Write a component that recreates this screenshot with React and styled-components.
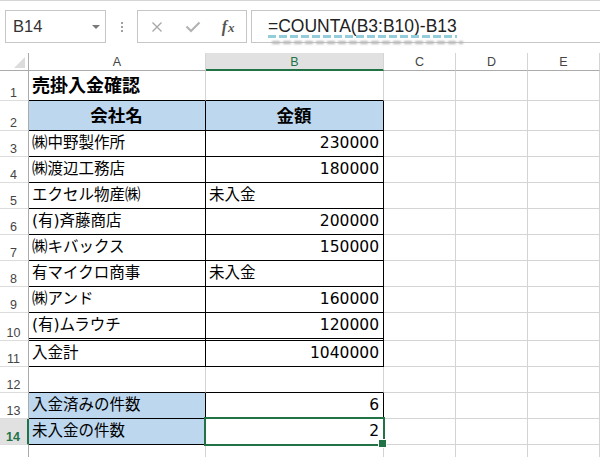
import styled, { createGlobalStyle } from 'styled-components'

const GlobalStyle = createGlobalStyle`
  html, body { margin: 0; padding: 0; background: #fff; }
  * { box-sizing: border-box; }
`

const green = '#217346'
const gridLine = '#d4d4d4'
const blue = '#bdd7ee'

const Page = styled.div`
  width: 600px;
  height: 457px;
  overflow: hidden;
  background: #fff;
  font-family: "Liberation Sans", Arial, sans-serif;
`

const FormulaBar = styled.div`
  height: 53px;
  border-top: 1px solid #d5d5d5;
  display: flex;
  align-items: flex-start;
  padding: 9px 0 0 5px;
`

const NameBox = styled.div`
  width: 101px;
  height: 33px;
  border: 1px solid #c6c6c6;
  display: flex;
  align-items: center;
  justify-content: space-between;
  padding: 0 5px 0 7px;
  font-size: 16.5px;
  color: #333;
`

const Arrow = styled.span`
  width: 0;
  height: 0;
  border-left: 4px solid transparent;
  border-right: 4px solid transparent;
  border-top: 4px solid #7a7a7a;
  margin-top: 1px;
`

const Grip = styled.div`
  width: 31px;
  height: 33px;
  display: flex;
  align-items: center;
  justify-content: center;
  &::before {
    content: '';
    width: 2px;
    height: 2px;
    background: #a0a0a0;
    margin-top: -8px;
    box-shadow: 0 4px 0 #a0a0a0, 0 8px 0 #a0a0a0;
  }
`

const ButtonGroup = styled.div`
  width: 110px;
  height: 33px;
  border: 1px solid #c6c6c6;
  display: flex;
  align-items: center;
  padding-left: 1px;
`

const BarButton = styled.span`
  width: 36px;
  display: flex;
  align-items: center;
  justify-content: center;
`

const Fx = styled.span`
  font-family: "Liberation Serif", "DejaVu Serif", serif;
  font-style: italic;
  font-weight: 700;
  font-size: 16px;
  color: #555;
  small {
    font-size: 13px;
    margin-left: 1px;
  }
`

const FormulaInput = styled.div`
  flex: 1;
  height: 33px;
  margin-left: 4px;
  border: 1px solid #c6c6c6;
  border-right: none;
  display: flex;
  align-items: center;
  padding-left: 16px;
  font-size: 17.5px;
  color: #222;
`

const FormulaText = styled.span`
  position: relative;
  &::after {
    content: '';
    position: absolute;
    left: 0;
    right: 0;
    bottom: -1px;
    height: 3px;
    background: repeating-linear-gradient(90deg, #93cddb 0 8px, transparent 8px 11px);
  }
  &::before {
    content: '';
    position: absolute;
    left: 4px;
    right: -6px;
    bottom: -7px;
    height: 3px;
    filter: blur(1px);
    background: repeating-linear-gradient(90deg, #b5b5b5 0 8px, transparent 8px 11px);
  }
`

const Sheet = styled.div`
  display: grid;
  grid-template-columns: 29px 177px 178px 72px 72px 72px;
  grid-template-rows: 18px 30px 30px repeat(7, 26px) 28px repeat(5, 26px);
`

const Corner = styled.div`
  border-right: 1px solid #ababab;
  border-bottom: 1px solid #ababab;
  display: flex;
  align-items: flex-end;
  justify-content: flex-end;
  padding: 0 3px 2px 0;
  &::after {
    content: '';
    width: 0;
    height: 0;
    border-left: 11px solid transparent;
    border-bottom: 11px solid #dcdcdc;
  }
`

const ColHead = styled.div`
  display: flex;
  align-items: center;
  justify-content: center;
  padding-top: 2px;
  border-right: 1px solid #d5d5d5;
  border-bottom: ${p => (p.$active ? `2px solid ${green}` : '1px solid #ababab')};
  background: ${p => (p.$active ? '#e1e1e1' : '#fff')};
  color: ${p => (p.$active ? green : '#444')};
  font-size: 12.5px;
  line-height: 1;
`

const RowHead = styled.div`
  display: flex;
  align-items: flex-end;
  justify-content: center;
  padding: 0 1px 1px 0;
  border-right: ${p => (p.$active ? `2px solid ${green}` : '1px solid #ababab')};
  border-bottom: 1px solid #dcdcdc;
  background: ${p => (p.$active ? '#e1e1e1' : '#fff')};
  color: ${p => (p.$active ? green : '#444')};
  font-weight: ${p => (p.$active ? 700 : 400)};
  font-size: 12.5px;
  line-height: 1;
`

const Cell = styled.div`
  position: relative;
  display: flex;
  align-items: flex-end;
  justify-content: ${p =>
    p.$align === 'right' ? 'flex-end' : p.$align === 'center' ? 'center' : 'flex-start'};
  padding: 0 4px 5px 3px;
  border-right: 1px solid ${p => p.$rc || gridLine};
  border-bottom: ${p => (p.$double ? '3px double #000' : `1px solid ${p.$bc || gridLine}`)};
  background: ${p => p.$fill || '#fff'};
  font-family: "DejaVu Sans", "Noto Sans CJK JP", sans-serif;
  font-size: ${p => p.$size || 15.5}px;
  font-weight: ${p => (p.$bold ? 700 : 400)};
  line-height: 1;
  white-space: nowrap;
  color: #000;
`

const Selection = styled.div`
  position: absolute;
  inset: -2px;
  border: 2px solid ${green};
  pointer-events: none;
  z-index: 2;
  &::after {
    content: '';
    position: absolute;
    right: -4px;
    bottom: -4px;
    width: 7px;
    height: 7px;
    background: ${green};
    border: 1px solid #fff;
  }
`

const rows = [
  { a: '売掛入金確認', title: true },
  { a: '会社名', b: '金額', head: true },
  { a: '㈱中野製作所', b: '230000' },
  { a: '㈱渡辺工務店', b: '180000' },
  { a: 'エクセル物産㈱', b: '未入金', bText: true },
  { a: '(有)斉藤商店', b: '200000' },
  { a: '㈱キバックス', b: '150000' },
  { a: '有マイクロ商事', b: '未入金', bText: true },
  { a: '㈱アンド', b: '160000' },
  { a: '(有)ムラウチ', b: '120000', double: true },
  { a: '入金計', b: '1040000' },
  { gap: true },
  { a: '入金済みの件数', b: '6', fill: true },
  { a: '未入金の件数', b: '2', fill: true, selected: true },
  { blank: true },
]

const columns = ['A', 'B', 'C', 'D', 'E']

function CancelIcon() {
  return (
    <svg width="12" height="12" viewBox="0 0 12 12">
      <path d="M1.5 1.5 L10.5 10.5 M10.5 1.5 L1.5 10.5" stroke="#a8a8a8" strokeWidth="1.4" fill="none" />
    </svg>
  )
}

function EnterIcon() {
  return (
    <svg width="16" height="12" viewBox="0 0 16 12">
      <path d="M1.5 5.5 L6 10 L14.5 1.5" stroke="#b3b3b3" strokeWidth="2.2" fill="none" />
    </svg>
  )
}

function App() {
  return (
    <Page>
      <GlobalStyle />
      <FormulaBar>
        <NameBox>
          B14
          <Arrow />
        </NameBox>
        <Grip />
        <ButtonGroup>
          <BarButton><CancelIcon /></BarButton>
          <BarButton><EnterIcon /></BarButton>
          <BarButton><Fx>f<small>x</small></Fx></BarButton>
        </ButtonGroup>
        <FormulaInput>
          <FormulaText>=COUNTA(B3:B10)-B13</FormulaText>
        </FormulaInput>
      </FormulaBar>

      <Sheet>
        <Corner />
        {columns.map(c => (
          <ColHead key={c} $active={c === 'B'}>{c}</ColHead>
        ))}

        {rows.map((r, i) => {
          const n = i + 1
          const inTable = !r.title && !r.gap && !r.blank
          const rc = inTable ? '#000' : undefined
          const bc = inTable || r.title || r.gap ? '#000' : undefined
          return [
            <RowHead key={`h${n}`} $active={r.selected}>{n}</RowHead>,
            <Cell
              key={`a${n}`}
              $rc={rc}
              $bc={bc}
              $double={r.double}
              $fill={r.head || r.fill ? blue : undefined}
              $align={r.head ? 'center' : 'left'}
              $bold={r.head || r.title}
              $size={r.title ? 18 : r.head ? 17.5 : undefined}
            >
              {r.a}
            </Cell>,
            <Cell
              key={`b${n}`}
              $rc={rc}
              $bc={bc}
              $double={r.double}
              $fill={r.head ? blue : undefined}
              $align={r.head ? 'center' : r.bText ? 'left' : 'right'}
              $bold={r.head}
              $size={r.head ? 17.5 : undefined}
            >
              {r.b}
              {r.selected && <Selection />}
            </Cell>,
            <Cell key={`c${n}`} />,
            <Cell key={`d${n}`} />,
            <Cell key={`e${n}`} />,
          ]
        })}
      </Sheet>
    </Page>
  )
}

export default App
